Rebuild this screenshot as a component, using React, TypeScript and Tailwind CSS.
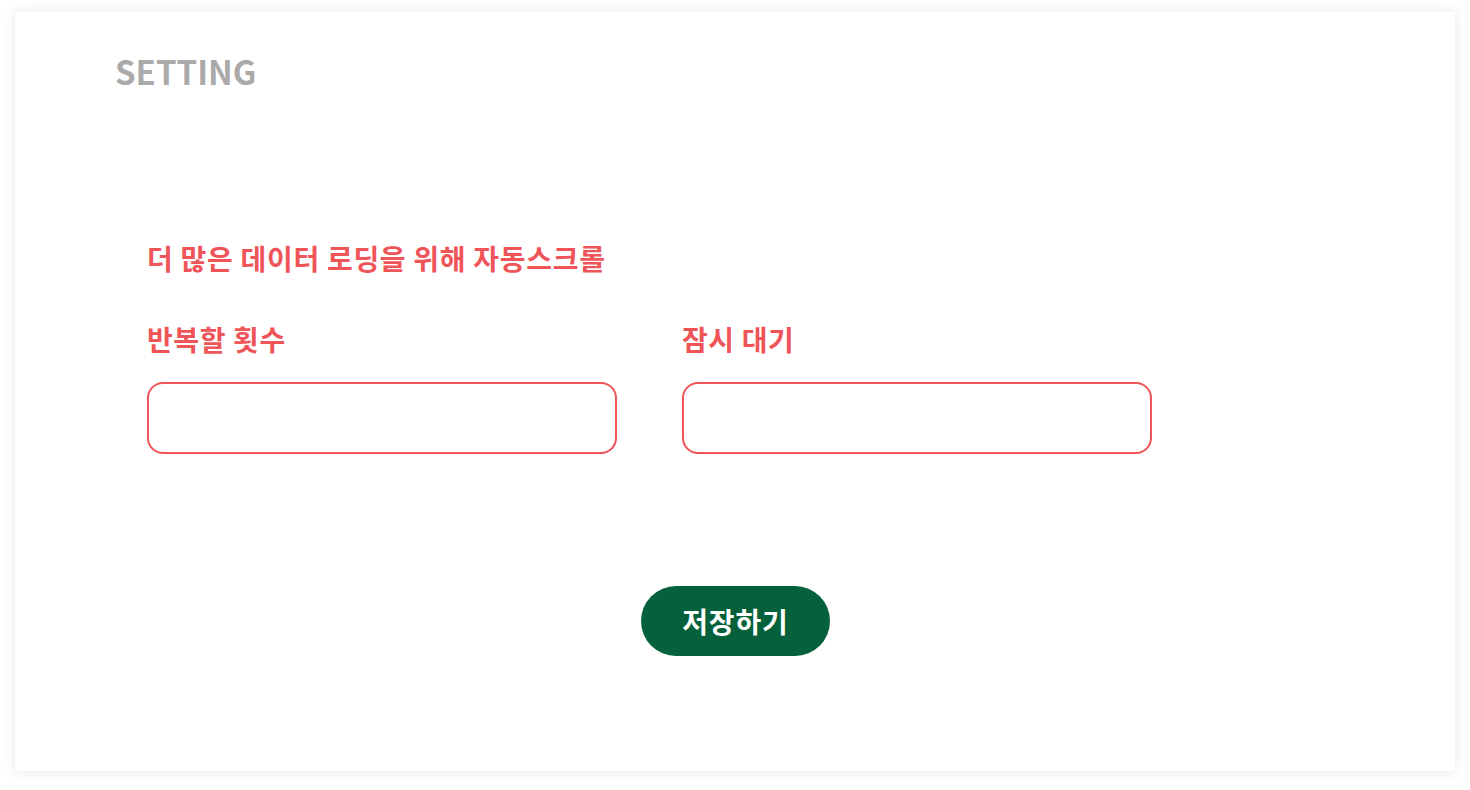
import React from "react";

export default function App() {
  const font = { fontFamily: '"Noto Sans CJK KR", "Noto Sans", sans-serif' };
  return (
    <div className="w-[1470px] h-[790px] bg-white pt-[12px] px-[15px]" style={font}>
      <div className="w-[1440px] h-[759px] bg-white shadow-[0_0_12px_rgba(0,0,0,0.10)] flex flex-col">
        <div className="pl-[100px] pt-[43px] text-[33px] font-bold leading-none tracking-[0px] text-[#aaaaaa]">SETTING</div>
        <div className="pl-[132px] pt-[156px] flex flex-col">
          <div className="text-[28px] font-bold leading-none tracking-[0.7px] text-[#ef5458]">더 많은 데이터 로딩을 위해 자동스크롤</div>
          <div className="flex gap-[65px] mt-[53px]">
            <div className="flex flex-col">
              <div className="text-[28px] font-bold leading-none tracking-[0.6px] text-[#ef5458]">반복할 횟수</div>
              <input className="mt-[29px] w-[470px] h-[72px] rounded-[16px] border-2 border-[#ef5458] outline-none" />
            </div>
            <div className="flex flex-col">
              <div className="text-[28px] font-bold leading-none tracking-[0.6px] text-[#ef5458]">잠시 대기</div>
              <input className="mt-[29px] w-[470px] h-[72px] rounded-[16px] border-2 border-[#ef5458] outline-none" />
            </div>
          </div>
        </div>
        <div className="flex justify-center mt-[132px]">
          <button className="w-[189px] h-[70px] rounded-full bg-[#04613b] text-white text-[28px] font-bold leading-none tracking-[0.8px] pl-[0.8px]">저장하기</button>
        </div>
      </div>
    </div>
  );
}
